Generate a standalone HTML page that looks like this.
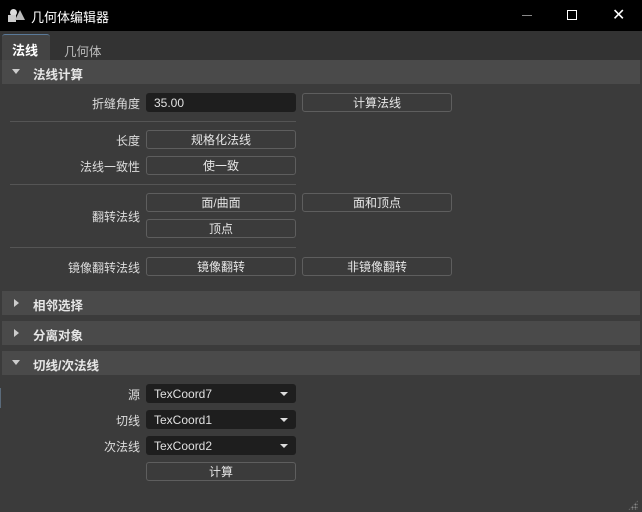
<!DOCTYPE html>
<html><head><meta charset="utf-8"><style>
*{margin:0;padding:0;box-sizing:border-box}
body{width:642px;height:512px;background:#3b3b3b;font-family:"Liberation Sans","Noto Sans CJK SC",sans-serif;font-size:12px;color:#ddd;position:relative;overflow:hidden}
.abs{position:absolute}
.title{left:0;top:0;width:642px;height:31px;background:#000;color:#fff;font-size:13px}
.tabs{left:0;top:31px;width:642px;height:29px;background:#333}
.sec{left:2px;width:638px;height:24px;background:#4a4a4a;font-weight:bold;color:#e6e6e6;font-size:12.5px}
.sec span{position:absolute;left:31px;top:4px}
.tri{position:absolute;left:10px;top:9px;width:0;height:0;border-left:4px solid transparent;border-right:4px solid transparent;border-top:5px solid #ccc}
.tri.r{left:12px;top:8px;border-top:4px solid transparent;border-bottom:4px solid transparent;border-left:5px solid #ccc;border-right:0}
.lbl{right:502px;text-align:right;white-space:nowrap;color:#ddd}
.btn{width:150px;height:19px;border:1px solid #5e5e5e;border-radius:3px;text-align:center;line-height:18px;color:#e6e6e6}
.inp{width:150px;height:19px;background:#1e1e1e;border-radius:3px;line-height:20px;padding-left:8px;color:#e0e0e0}
.dd:after{content:"";position:absolute;right:8px;top:8px;border-left:4px solid transparent;border-right:4px solid transparent;border-top:4px solid #ddd}
.sep{left:10px;width:286px;height:1px;background:#555}
</style></head><body>
<div class="abs title">
  <div class="abs" style="left:10px;top:9px;width:7px;height:7px;border-radius:50%;background:#ddd"></div>
  <div class="abs" style="left:8px;top:15px;width:8px;height:7px;background:#ccc"></div>
  <div class="abs" style="left:15px;top:10px;width:0;height:0;border-left:5px solid transparent;border-right:5px solid transparent;border-bottom:10px solid #bbb"></div>
  <div class="abs" style="left:31px;top:7px">几何体编辑器</div>
  <div class="abs" style="left:522px;top:15px;width:10px;height:1px;background:#888"></div>
  <div class="abs" style="left:567px;top:10px;width:10px;height:10px;border:1px solid #fff"></div>
  <div class="abs" style="left:612px;top:5px;font-size:16px;color:#fff">✕</div>
</div>
<div class="abs tabs">
  <div class="abs" style="left:2px;top:3px;width:48px;height:26px;background:#444;border-top:1px solid #5a7a9a;border-radius:3px 3px 0 0"></div>
  <div class="abs" style="left:12px;top:9px;font-weight:bold;color:#fff;font-size:13px">法线</div>
  <div class="abs" style="left:64px;top:10px;color:#bbb;font-size:12.5px">几何体</div>
</div>
<div class="abs sec" style="top:60px"><div class="tri"></div><span>法线计算</span></div>
<div class="abs lbl" style="top:95px">折缝角度</div>
<div class="abs inp" style="left:146px;top:93px">35.00</div>
<div class="abs btn" style="left:302px;top:93px">计算法线</div>
<div class="abs sep" style="top:121px"></div>
<div class="abs lbl" style="top:132px">长度</div>
<div class="abs btn" style="left:146px;top:130px">规格化法线</div>
<div class="abs lbl" style="top:158px">法线一致性</div>
<div class="abs btn" style="left:146px;top:156px">使一致</div>
<div class="abs sep" style="top:184px"></div>
<div class="abs lbl" style="top:208px">翻转法线</div>
<div class="abs btn" style="left:146px;top:193px">面/曲面</div>
<div class="abs btn" style="left:302px;top:193px">面和顶点</div>
<div class="abs btn" style="left:146px;top:219px">顶点</div>
<div class="abs sep" style="top:247px"></div>
<div class="abs lbl" style="top:259px">镜像翻转法线</div>
<div class="abs btn" style="left:146px;top:257px">镜像翻转</div>
<div class="abs btn" style="left:302px;top:257px">非镜像翻转</div>
<div class="abs sec" style="top:291px"><div class="tri r"></div><span>相邻选择</span></div>
<div class="abs sec" style="top:321px"><div class="tri r"></div><span>分离对象</span></div>
<div class="abs sec" style="top:351px"><div class="tri"></div><span>切线/次法线</span></div>
<div class="abs lbl" style="top:386px">源</div>
<div class="abs inp dd" style="left:146px;top:384px">TexCoord7</div>
<div class="abs lbl" style="top:412px">切线</div>
<div class="abs inp dd" style="left:146px;top:410px">TexCoord1</div>
<div class="abs lbl" style="top:438px">次法线</div>
<div class="abs inp dd" style="left:146px;top:436px">TexCoord2</div>
<div class="abs btn" style="left:146px;top:462px">计算</div>
<div class="abs" style="left:0;top:388px;width:1px;height:20px;background:#5a6a7a"></div>
<div class="abs" style="left:628px;top:500px;width:10px;height:10px;background:radial-gradient(circle,#888 0.8px,transparent 1.2px) 0 0/3px 3px;clip-path:polygon(100% 0,100% 100%,0 100%)"></div>
</body></html>
